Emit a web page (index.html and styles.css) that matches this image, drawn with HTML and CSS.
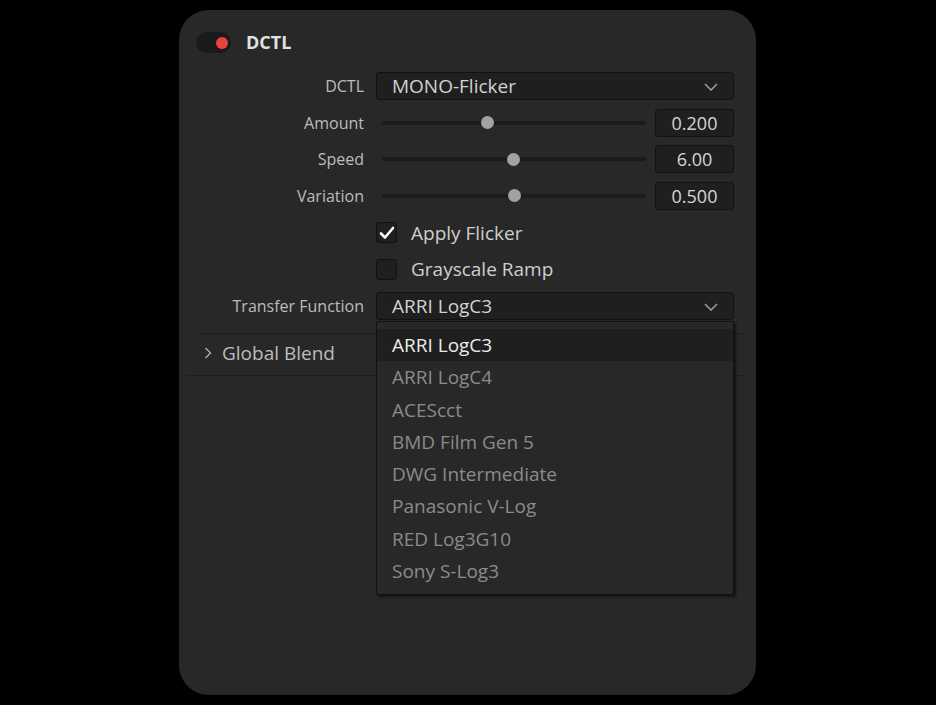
FILE: index.html
```html
<!DOCTYPE html>
<html>
<head>
<meta charset="utf-8">
<link rel="stylesheet" href="styles.css">
</head>
<body>
<div class="panel">
  <div class="header">
    <div class="toggle"><span class="dot"></span></div>
    <div class="title">DCTL</div>
  </div>
  <div class="form">
    <div class="label">DCTL</div>
    <div class="select">
      <span>MONO-Flicker</span>
      <svg class="chev" width="14" height="8" viewBox="0 0 14 8"><path d="M1 1 L7 7 L13 1" fill="none" stroke="#9a9a9a" stroke-width="1.6"/></svg>
    </div>

    <div class="label">Amount</div>
    <div class="slider-row">
      <div class="track"><span class="knob" style="left:105px"></span></div>
      <div class="num">0.200</div>
    </div>

    <div class="label">Speed</div>
    <div class="slider-row">
      <div class="track"><span class="knob" style="left:131px"></span></div>
      <div class="num">6.00</div>
    </div>

    <div class="label">Variation</div>
    <div class="slider-row">
      <div class="track"><span class="knob" style="left:132px"></span></div>
      <div class="num">0.500</div>
    </div>

    <div class="label"></div>
    <div class="check-row">
      <div class="box">
        <svg width="16" height="14" viewBox="0 0 16 14"><path d="M2 7.5 L6 11.5 L14 2" fill="none" stroke="#ffffff" stroke-width="2.6" stroke-linecap="round" stroke-linejoin="round"/></svg>
      </div>
      <span>Apply Flicker</span>
    </div>

    <div class="label"></div>
    <div class="check-row">
      <div class="box"></div>
      <span>Grayscale Ramp</span>
    </div>

    <div class="label">Transfer Function</div>
    <div class="select">
      <span>ARRI LogC3</span>
      <svg class="chev" width="14" height="8" viewBox="0 0 14 8"><path d="M1 1 L7 7 L13 1" fill="none" stroke="#9a9a9a" stroke-width="1.6"/></svg>
    </div>
  </div>

  <div class="divider d1"></div>
  <div class="section">
    <svg width="8" height="12" viewBox="0 0 8 12"><path d="M1.5 1 L6.5 6 L1.5 11" fill="none" stroke="#a8a8a8" stroke-width="1.5"/></svg>
    <span>Global Blend</span>
  </div>
  <div class="divider d2"></div>

  <div class="menu">
    <div class="item selected">ARRI LogC3</div>
    <div class="item">ARRI LogC4</div>
    <div class="item">ACEScct</div>
    <div class="item">BMD Film Gen 5</div>
    <div class="item">DWG Intermediate</div>
    <div class="item">Panasonic V-Log</div>
    <div class="item">RED Log3G10</div>
    <div class="item">Sony S-Log3</div>
  </div>
</div>
</body>
</html>
```

FILE: styles.css
```css
html, body {
  margin: 0;
  padding: 0;
  background: #000;
  width: 936px;
  height: 705px;
  overflow: hidden;
}

body {
  font-family: "Open Sans", "DejaVu Sans", sans-serif;
}

.panel {
  position: relative;
  box-sizing: border-box;
  width: 577px;
  height: 685px;
  margin: 10px 0 0 179px;
  padding-top: 22px;
  background: #282828;
  border-radius: 30px;
}

.header {
  display: flex;
  align-items: center;
  gap: 15px;
  height: 21px;
  padding-left: 17px;
}

.toggle {
  position: relative;
  width: 35px;
  height: 21px;
  border-radius: 11px;
  background: #1a1a1a;
}

.dot {
  position: absolute;
  left: 20px;
  top: 4.5px;
  width: 12px;
  height: 12px;
  border-radius: 50%;
  background: #e8433a;
}

.title {
  font-size: 18px;
  font-weight: 700;
  color: #e2e2e2;
  line-height: 21px;
}

.form {
  display: grid;
  grid-template-columns: 185px 358px;
  column-gap: 12px;
  grid-auto-rows: 36.67px;
  align-items: center;
  margin-top: 14.67px;
}

.label {
  text-align: right;
  font-size: 16px;
  color: #bcbcbc;
  line-height: 20px;
}

.select {
  box-sizing: border-box;
  height: 28px;
  display: flex;
  align-items: center;
  justify-content: space-between;
  padding: 0 15px 0 15px;
  background: #1f1f1f;
  border: 1px solid #121212;
  border-radius: 3px;
  font-size: 19px;
  color: #d2d2d2;
}

.chev {
  margin-top: 2px;
}

.slider-row {
  display: flex;
  align-items: center;
  height: 28px;
}

.track {
  position: relative;
  width: 264px;
  height: 4px;
  margin-left: 6px;
  margin-right: 9px;
  background: #1b1b1b;
  border-radius: 2px;
}

.knob {
  position: absolute;
  top: -4.5px;
  width: 13px;
  height: 13px;
  margin-left: -6.5px;
  border-radius: 50%;
  background: #a2a2a2;
}

.num {
  box-sizing: border-box;
  width: 79px;
  height: 28px;
  display: flex;
  align-items: center;
  justify-content: center;
  background: #1f1f1f;
  border: 1px solid #121212;
  border-radius: 3px;
  font-size: 18px;
  color: #d6d6d6;
}

.check-row {
  display: flex;
  align-items: center;
  gap: 14px;
  font-size: 19px;
  color: #cfcfcf;
}

.box {
  box-sizing: border-box;
  width: 21px;
  height: 21px;
  display: flex;
  align-items: center;
  justify-content: center;
  background: #1f1f1f;
  border: 1px solid #111;
  border-radius: 3px;
}

.divider {
  height: 1px;
  background: #1e1e1e;
}

.d1 {
  margin: 8.3px 10px 0 18px;
}

.d2 {
  margin: 0 10px 0 8px;
}

.section {
  display: flex;
  align-items: center;
  gap: 10px;
  height: 41px;
  box-sizing: border-box;
  padding: 0 0 3px 25px;
  font-size: 19px;
  color: #bdbdbd;
}

.menu {
  position: absolute;
  left: 197px;
  top: 311px;
  box-sizing: border-box;
  width: 358px;
  height: 274px;
  padding-top: 6.85px;
  background: #282828;
  border: 1px solid #111;
  border-radius: 2px;
  box-shadow: 2px 2px 3px rgba(0, 0, 0, 0.55);
}

.item {
  height: 32.3px;
  display: flex;
  align-items: center;
  padding-left: 15px;
  font-size: 19px;
  color: #8b8b8b;
}

.item.selected {
  background: #1f1f1f;
  color: #ececec;
}
```
